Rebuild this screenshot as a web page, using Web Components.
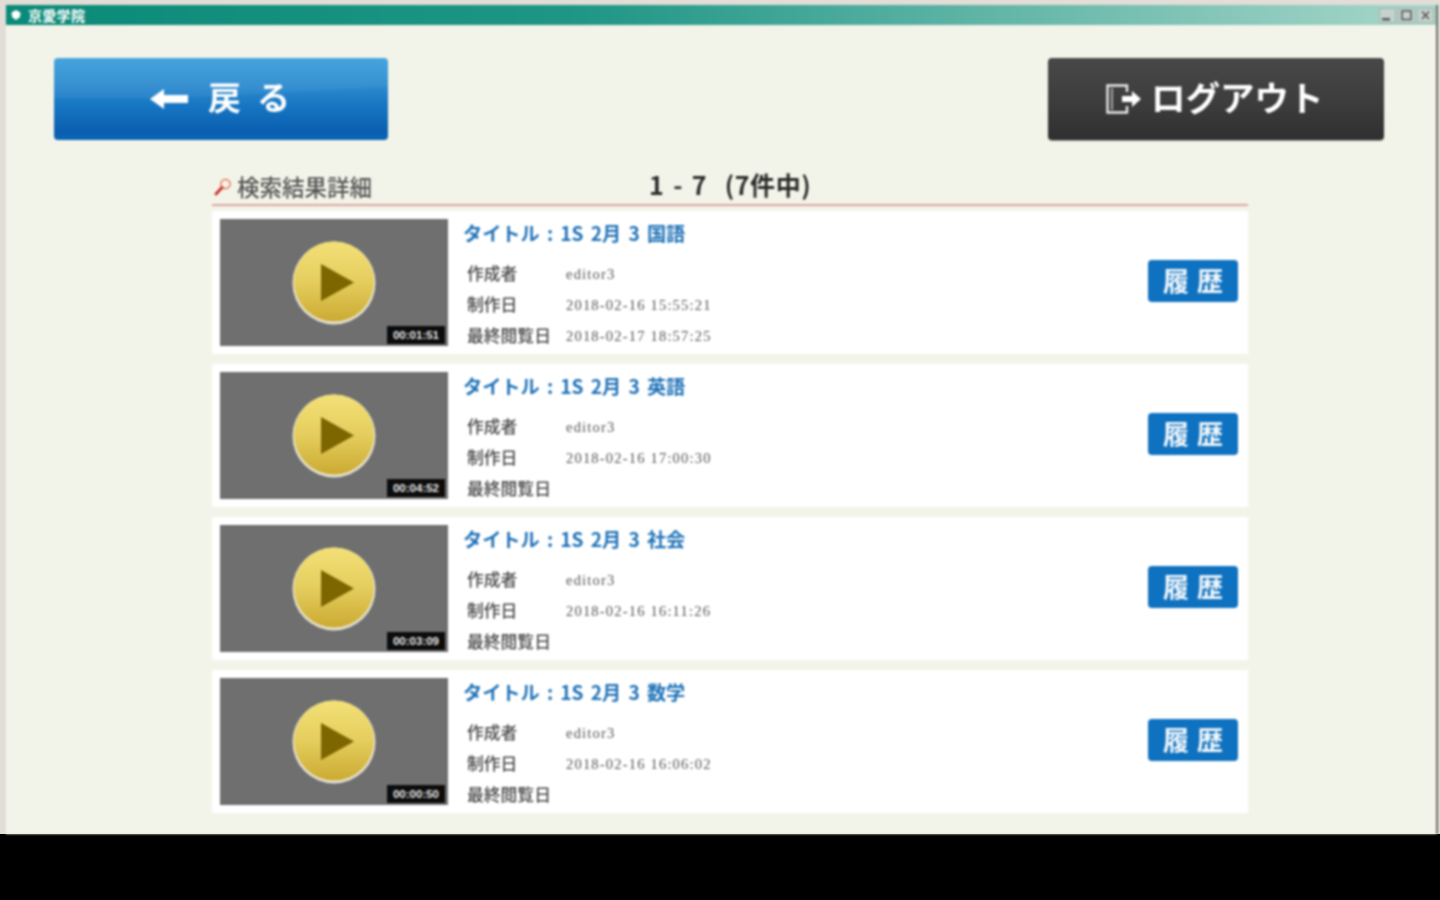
<!DOCTYPE html>
<html lang="ja">
<head>
<meta charset="utf-8">
<title>京愛学院</title>
<style>
  html, body { margin: 0; height: 100%; background: #000; overflow: hidden; }
  body { font-family: "Noto Sans CJK JP", "Noto Sans", sans-serif; }
</style>
</head>
<body>
<app-window>
  <title-bar slot="bar">京愛学院</title-bar>
  <tool-bar slot="tools">
    <nav-button kind="back">戻る</nav-button>
    <nav-button kind="logout">ログアウト</nav-button>
  </tool-bar>
  <result-list slot="list" heading="検索結果詳細" range="1 - 7  (7件中)">
    <result-row subject="国語" duration="00:01:51" created="2018-02-16 15:55:21" viewed="2018-02-17 18:57:25"></result-row>
    <result-row subject="英語" duration="00:04:52" created="2018-02-16 17:00:30"></result-row>
    <result-row subject="社会" duration="00:03:09" created="2018-02-16 16:11:26"></result-row>
    <result-row subject="数学" duration="00:00:50" created="2018-02-16 16:06:02"></result-row>
  </result-list>
</app-window>

<script>
const JP = `"Noto Sans CJK JP", "Noto Sans", sans-serif`;

class AppWindow extends HTMLElement {
  constructor() {
    super();
    this.attachShadow({ mode: 'open' }).innerHTML = `
      <style>
        :host {
          display: flex; flex-direction: column; box-sizing: border-box;
          height: 834px; padding: 5px 4px 0 6px;
          background: #e2ded7;
        }
        .client {
          flex: 1; display: flex; flex-direction: column;
          background: #f3f4e9; box-shadow: 2px 0 0 #6e6e6a;
          filter: blur(.8px);
        }
        .body { flex: 1; display: flex; flex-direction: column; padding: 33px 52px 0 48px; }
      </style>
      <div class="client">
        <slot name="bar"></slot>
        <div class="body">
          <slot name="tools"></slot>
          <slot name="list"></slot>
        </div>
      </div>`;
  }
}

class TitleBar extends HTMLElement {
  constructor() {
    super();
    const winBtn = (glyph) => `
      <svg class="btn" width="17" height="15" viewBox="0 0 17 15">
        <rect x=".5" y=".5" width="16" height="14" fill="#c6d2cc" stroke="#a9b3ae"/>
        ${glyph}
      </svg>`;
    this.attachShadow({ mode: 'open' }).innerHTML = `
      <style>
        :host {
          display: flex; align-items: center; height: 20px; padding: 0 2px 0 4px;
          background: linear-gradient(90deg, #0a8a78 0%, #1f9686 40%, #6fbcae 75%, #a8d7ca 100%);
          color: #fff; font: 700 14px/20px ${JP};
        }
        .icon { margin-right: 6px; }
        .name { flex: 1; letter-spacing: .3px; }
        .btns { display: flex; gap: 2px; }
      </style>
      <svg class="icon" width="12" height="12" viewBox="0 0 12 12">
        <path d="M6 1 10.5 3.5 10 8 6 11 2 8 1.5 3.5Z" fill="#fff"/>
      </svg>
      <span class="name"><slot></slot></span>
      <div class="btns">
        ${winBtn('<rect x="3" y="10" width="8" height="2.5" fill="#55595a"/>')}
        ${winBtn('<rect x="4" y="3" width="9" height="8.5" fill="none" stroke="#55595a" stroke-width="1.6"/>')}
        ${winBtn('<path d="M5 3.5 12 11M12 3.5 5 11" stroke="#55595a" stroke-width="1.6"/>')}
      </div>`;
  }
}

class ToolBar extends HTMLElement {
  constructor() {
    super();
    this.attachShadow({ mode: 'open' }).innerHTML = `
      <style>
        :host { display: flex; justify-content: space-between; align-items: flex-start; height: 81px; }
      </style>
      <slot></slot>`;
  }
}

class NavButton extends HTMLElement {
  constructor() {
    super();
    const back = this.getAttribute('kind') === 'back';
    const icon = back
      ? `<svg width="38" height="22" viewBox="0 0 38 22"><path d="M0 11 14 1V7H38V15H14V21Z" fill="#fff"/></svg>`
      : `<svg width="36" height="30" viewBox="0 0 36 30">
           <path d="M21 8V1.5H1.5V28.5H21V22" fill="none" stroke="#e8e8e8" stroke-width="2.4"/>
           <path d="M6 4V26" stroke="#cfcfcf" stroke-width="1.4"/>
           <path d="M16 12H26V7L35 15 26 23V18H16Z" fill="#fff"/>
         </svg>`;
    this.attachShadow({ mode: 'open' }).innerHTML = `
      <style>
        :host {
          display: flex; align-items: center; box-sizing: border-box;
          height: 82px; border-radius: 4px; color: #fff; font-weight: 700;
          position: relative; overflow: hidden;
        }
        :host([kind="back"]) {
          width: 334px; padding: 0 0 0 96px; gap: 20px;
          font-size: 33px; letter-spacing: 16px;
          background: linear-gradient(180deg, #3d9fdb 0%, #2e8dd0 30%, #1776c2 58%, #0a5fb0 90%, #0b66b6 100%);
        }
        :host([kind="back"])::before {
          content: ""; position: absolute; left: 0; right: 0; top: 0; height: 40px;
          background: linear-gradient(177deg, rgba(255,255,255,.05) 80%, transparent 82%);
        }
        :host([kind="logout"]) {
          width: 336px; padding: 0 0 0 58px; gap: 9px;
          font-size: 34.5px;
          background: linear-gradient(180deg, #484848 0%, #3e3e3e 50%, #2f2f2f 100%);
          box-shadow: 0 1px 1px #999;
        }
        svg, span { position: relative; }
        span { line-height: 1; white-space: nowrap; margin-bottom: 5px; }
      </style>
      ${icon}<span><slot></slot></span>`;
  }
}

class ResultList extends HTMLElement {
  constructor() {
    super();
    this.attachShadow({ mode: 'open' }).innerHTML = `
      <style>
        :host { display: block; width: 1036px; margin: 25px 0 0 158px; }
        .head {
          display: grid; grid-template-columns: 437px auto; align-items: center;
          height: 42px; box-sizing: border-box; border-bottom: 2px solid #dda5a3;
        }
        .label {
          display: flex; align-items: center; gap: 5px; padding: 4px 0 0 2px;
          color: #555; font-size: 22.5px; line-height: 30px; font-weight: 500;
        }
        .range {
          color: #2b2b2b; font-size: 25px; line-height: 30px; font-weight: 700;
          letter-spacing: .6px; word-spacing: 2.5px; white-space: pre;
        }
        .rows { display: flex; flex-direction: column; gap: 10px; margin-top: 5px; }
      </style>
      <div class="head">
        <div class="label">
          <svg width="18" height="19" viewBox="0 0 18 19">
            <circle cx="11.5" cy="7" r="4.6" fill="#fdf3ea" stroke="#d97a50" stroke-width="1.5"/>
            <path d="M8 10.5 2 17" stroke="#cc2b2b" stroke-width="2.8" stroke-linecap="round"/>
          </svg>
          <span>${this.getAttribute('heading')}</span>
        </div>
        <div class="range">${this.getAttribute('range')}</div>
      </div>
      <div class="rows"><slot></slot></div>`;
  }
}

class VideoThumb extends HTMLElement {
  constructor() {
    super();
    this.attachShadow({ mode: 'open' }).innerHTML = `
      <style>
        :host {
          display: flex; align-items: center; justify-content: center; position: relative;
          width: 228px; height: 127px; background: #6f6f6f; flex: none;
        }
        .time {
          position: absolute; right: 3px; bottom: 2px; width: 58px; height: 18px;
          background: #0c0c0c; color: #e6e6e6; text-align: center;
          font: 700 11.5px/18px "Liberation Sans", sans-serif;
        }
      </style>
      <svg width="84" height="84" viewBox="0 0 84 84">
        <defs>
          <linearGradient id="gold" x1="0" y1="0" x2="0" y2="1">
            <stop offset="0" stop-color="#f3e077"/>
            <stop offset=".5" stop-color="#e5ce5e"/>
            <stop offset="1" stop-color="#cbaa32"/>
          </linearGradient>
        </defs>
        <circle cx="42" cy="42" r="41.5" fill="#e6e2d2"/>
        <circle cx="42" cy="40.5" r="40" fill="url(#gold)"/>
        <path d="M29 23V60L62 41.5Z" fill="#7d6600"/>
      </svg>
      <span class="time"><slot></slot></span>`;
  }
}

class ResultRow extends HTMLElement {
  constructor() {
    super();
    const get = (k) => this.getAttribute(k) || '';
    this.attachShadow({ mode: 'open' }).innerHTML = `
      <style>
        :host {
          display: flex; align-items: flex-start; box-sizing: border-box;
          height: 143px; padding: 8px 10px 8px 8px; background: #fff;
        }
        .info { flex: 1; padding-left: 15px; }
        .title {
          color: #1f72b8; font-size: 19.2px; line-height: 28px; font-weight: 700;
          word-spacing: 2.8px; white-space: pre;
        }
        dl {
          display: grid; grid-template-columns: 99px auto; grid-auto-rows: 31px;
          margin: 10px 0 0 4px; align-items: center;
        }
        dt { color: #484848; font-size: 16.8px; line-height: 24px; font-weight: 500; white-space: nowrap; }
        dd {
          margin: 3px 0 0; color: #555; font: 14.5px/20px "Liberation Serif", serif;
          letter-spacing: 1.2px;
        }
        history-button { margin-top: 41px; }
      </style>
      <video-thumb>${get('duration')}</video-thumb>
      <div class="info">
        <div class="title">タイトル : 1S 2月 3 ${get('subject')}</div>
        <dl>
          <dt>作成者</dt><dd>editor3</dd>
          <dt>制作日</dt><dd>${get('created')}</dd>
          <dt>最終閲覧日</dt><dd>${get('viewed')}</dd>
        </dl>
      </div>
      <history-button>履歴</history-button>`;
  }
}

class HistoryButton extends HTMLElement {
  constructor() {
    super();
    this.attachShadow({ mode: 'open' }).innerHTML = `
      <style>
        :host {
          display: flex; align-items: center; justify-content: center; box-sizing: border-box;
          width: 90px; height: 42px; padding-bottom: 3px; border-radius: 4px; flex: none;
          background: #0f72c0; color: #f4f8fb;
          font-size: 26px; font-weight: 700; letter-spacing: 8px; text-indent: 8px;
        }
      </style>
      <slot></slot>`;
  }
}

customElements.define('app-window', AppWindow);
customElements.define('title-bar', TitleBar);
customElements.define('tool-bar', ToolBar);
customElements.define('nav-button', NavButton);
customElements.define('result-list', ResultList);
customElements.define('video-thumb', VideoThumb);
customElements.define('history-button', HistoryButton);
customElements.define('result-row', ResultRow);
</script>
</body>
</html>
